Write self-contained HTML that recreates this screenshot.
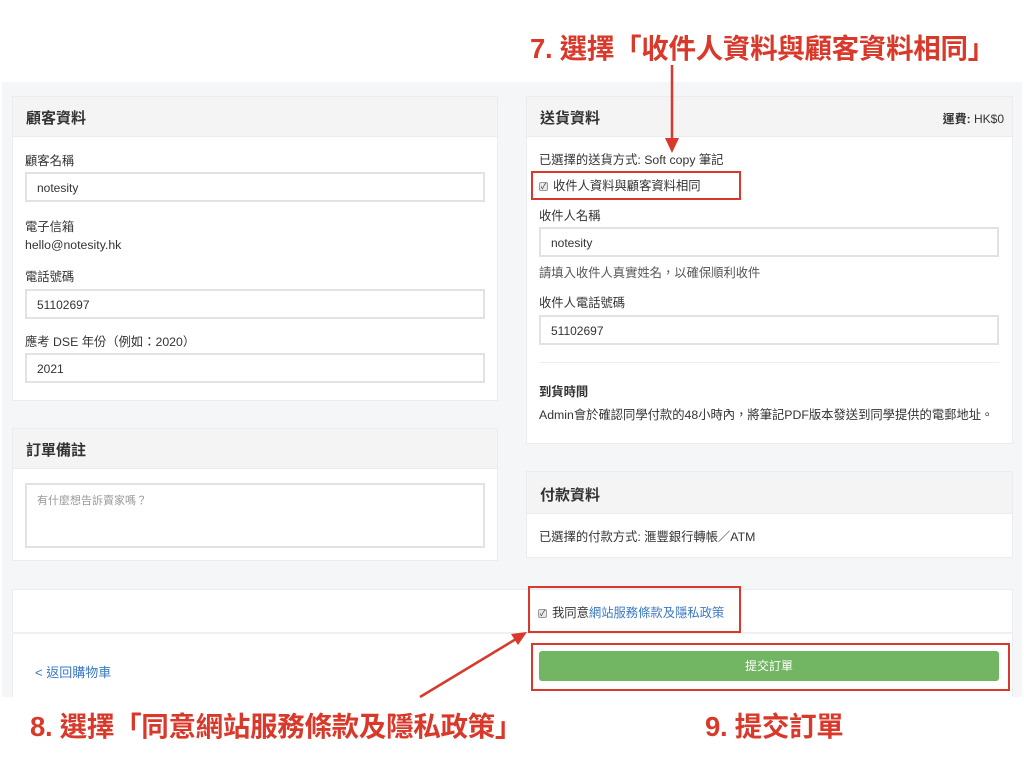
<!DOCTYPE html>
<html><head><meta charset="utf-8"><style>
*{margin:0;padding:0;box-sizing:border-box}
body{width:1024px;height:768px;background:#fff;position:relative;overflow:hidden;font-family:"Liberation Sans","Noto Sans CJK TC",sans-serif;color:#333;font-size:12px}
.a{position:absolute;white-space:nowrap}
.bg{position:absolute;left:2px;top:82px;width:1020px;height:615px;background:#f5f6f8}
.card{position:absolute;background:#fff;border:1px solid #ececee}
.hd{position:absolute;left:0;top:0;right:0;height:40px;background:#f4f4f5;border-bottom:1px solid #ececee}
.hd span{position:absolute;left:13px;top:10px;font-size:15px;font-weight:bold;color:#333}
.inp{position:absolute;border:2px solid #e2e2e2;background:#fff;font-size:12px;padding:7px 0 0 10px;color:#333}
.lab{position:absolute;font-size:12.3px;color:#333;white-space:nowrap}
.red{position:absolute;border:2.5px solid #d9392b}
.rt{position:absolute;color:#d9392b;font-weight:bold;font-size:27.5px;white-space:nowrap;font-family:"Liberation Sans","Noto Sans CJK TC",sans-serif;letter-spacing:-0.3px}
.cb{display:inline-block;width:9px;height:9px;border:1px solid #999;border-radius:2px;background:#e8e8e8;font-size:8px;line-height:8px;text-align:center;vertical-align:middle;margin-right:5px}
</style></head><body>
<div class="bg"></div>

<div class="rt" style="left:530px;top:26px">7. 選擇「收件人資料與顧客資料相同」</div>

<!-- card 1 -->
<div class="card" style="left:12px;top:96px;width:486px;height:305px">
 <div class="hd"><span>顧客資料</span></div>
</div>
<div class="lab" style="left:25px;top:151px">顧客名稱</div>
<div class="inp" style="left:25px;top:172px;width:460px;height:30px">notesity</div>
<div class="lab" style="left:25px;top:217px">電子信箱</div>
<div class="lab" style="left:25px;top:238px">hello@notesity.hk</div>
<div class="lab" style="left:25px;top:267px">電話號碼</div>
<div class="inp" style="left:25px;top:289px;width:460px;height:30px">51102697</div>
<div class="lab" style="left:25px;top:332px">應考 DSE 年份（例如：2020）</div>
<div class="inp" style="left:25px;top:353px;width:460px;height:30px">2021</div>

<!-- card 2 -->
<div class="card" style="left:12px;top:428px;width:486px;height:133px">
 <div class="hd"><span>訂單備註</span></div>
</div>
<div class="inp" style="left:25px;top:483px;width:460px;height:65px;color:#999;font-size:11px">有什麼想告訴賣家嗎？</div>

<!-- card 3 -->
<div class="card" style="left:526px;top:96px;width:487px;height:348px">
 <div class="hd"><span>送貨資料</span><b style="position:absolute;right:8px;top:13px;font-size:12px;font-weight:bold">運費: <span style="position:static;font-weight:normal;font-size:12px">HK$0</span></b></div>
</div>
<div class="lab" style="left:539px;top:150px">已選擇的送貨方式: Soft copy 筆記</div>
<div class="lab" style="left:539px;top:176px"><span class="cb">✓</span>收件人資料與顧客資料相同</div>
<div class="lab" style="left:539px;top:206px">收件人名稱</div>
<div class="inp" style="left:539px;top:227px;width:460px;height:30px">notesity</div>
<div class="lab" style="left:539px;top:263px;color:#555">請填入收件人真實姓名，以確保順利收件</div>
<div class="lab" style="left:539px;top:293px">收件人電話號碼</div>
<div class="inp" style="left:539px;top:315px;width:460px;height:30px">51102697</div>
<div class="a" style="left:539px;top:362px;width:460px;height:1px;background:#eee"></div>
<div class="lab" style="left:539px;top:382px;font-weight:bold">到貨時間</div>
<div class="lab" style="left:539px;top:405px">Admin會於確認同學付款的48小時內，將筆記PDF版本發送到同學提供的電郵地址。</div>

<!-- card 4 -->
<div class="card" style="left:526px;top:471px;width:487px;height:87px">
 <div class="hd" style="height:42px"><span style="top:12px">付款資料</span></div>
</div>
<div class="lab" style="left:539px;top:527px">已選擇的付款方式: 滙豐銀行轉帳／ATM</div>

<!-- bottom -->
<div class="card" style="left:12px;top:589px;width:1001px;height:108px;border-bottom:none"></div>
<div class="a" style="left:12px;top:632px;width:1001px;height:2px;background:#f0f0f2"></div>
<div class="lab" style="left:538px;top:603px"><span class="cb">✓</span>我同意<span style="color:#3a78c3">網站服務條款及隱私政策</span></div>
<div class="lab" style="left:35px;top:662px;color:#3a78c3;font-size:13px">&lt; 返回購物車</div>
<div class="a" style="left:539px;top:651px;width:460px;height:30px;background:#72b562;border-radius:3px;color:#fff;font-size:12px;text-align:center;line-height:30px">提交訂單</div>

<!-- red boxes -->
<div class="red" style="left:531px;top:171px;width:210px;height:29px"></div>
<div class="red" style="left:528px;top:586px;width:213px;height:47px"></div>
<div class="red" style="left:531px;top:643px;width:479px;height:48px"></div>

<svg class="a" style="left:0;top:0" width="1024" height="768">
 <line x1="672" y1="65" x2="672" y2="140" stroke="#d9392b" stroke-width="2.5"/>
 <polygon points="665,138 679,138 672,153" fill="#d9392b"/>
 <line x1="420" y1="697" x2="516" y2="639" stroke="#d9392b" stroke-width="2.5"/>
 <polygon points="527,632 511,634 518,645" fill="#d9392b"/>
</svg>

<div class="rt" style="left:30px;top:704px">8. 選擇「同意網站服務條款及隱私政策」</div>
<div class="rt" style="left:705px;top:704px">9. 提交訂單</div>
</body></html>
